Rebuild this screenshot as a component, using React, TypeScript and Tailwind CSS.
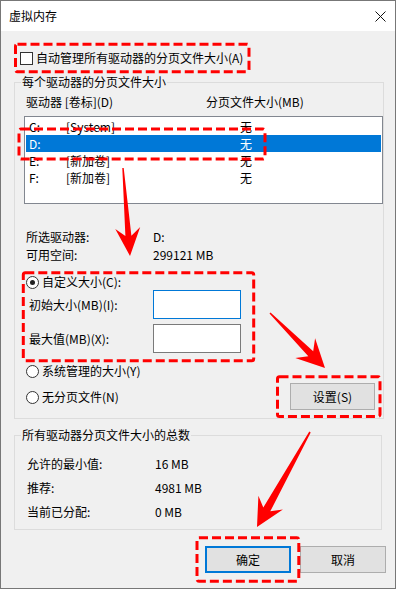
type Pt = [number, number];

// red annotation arrow: tail t, tip p, head length L, head half width H, shaft widths w0 (tail) / w1 (neck)
function arrow(t: Pt, p: Pt, L: number, H: number, w0: number, w1: number) {
  const dx = p[0] - t[0];
  const dy = p[1] - t[1];
  const len = Math.hypot(dx, dy);
  const ux = dx / len;
  const uy = dy / len;
  const nx = -uy;
  const ny = ux;
  const nk: Pt = [p[0] - ux * L * 0.72, p[1] - uy * L * 0.72];
  const bb: Pt = [p[0] - ux * L, p[1] - uy * L];
  const pts: Pt[] = [
    [t[0] + (nx * w0) / 2, t[1] + (ny * w0) / 2],
    [nk[0] + (nx * w1) / 2, nk[1] + (ny * w1) / 2],
    [bb[0] + nx * H, bb[1] + ny * H],
    p,
    [bb[0] - nx * H, bb[1] - ny * H],
    [nk[0] - (nx * w1) / 2, nk[1] - (ny * w1) / 2],
    [t[0] - (nx * w0) / 2, t[1] - (ny * w0) / 2],
  ];
  return pts.map((q) => q.map((v) => v.toFixed(1)).join(",")).join(" ");
}

const drives = [
  { d: "C:", label: "[System]", size: "无" },
  { d: "D:", label: "", size: "无", selected: true },
  { d: "E:", label: "[新加卷]", size: "无" },
  { d: "F:", label: "[新加卷]", size: "无" },
];

function Radio({ checked }: { checked?: boolean }) {
  return (
    <span className="w-[13px] h-[13px] rounded-full border border-[#333] bg-white flex items-center justify-center shrink-0">
      {checked && <span className="w-[5px] h-[5px] rounded-full bg-[#222]" />}
    </span>
  );
}

const boxes = [
  { x: 15.5, y: 44.2, w: 233.5, h: 27.6 },
  { x: 19, y: 129, w: 246, h: 30 },
  { x: 23.3, y: 272.7, w: 230.4, h: 88 },
  { x: 277.5, y: 376.7, w: 102.5, h: 39.8 },
  { x: 197, y: 537.7, w: 101.8, h: 43.6 },
];

export default function App() {
  return (
    <div className="relative w-[396px] h-[589px] font-['Noto_Sans_CJK_SC',sans-serif] text-[12px] text-black">
      <div className="w-full h-full border border-[#777] bg-[#f0f0f0] flex flex-col overflow-hidden">
        <div className="h-[30px] shrink-0 bg-white flex items-center justify-between pl-[8px] pr-[9px]">
          <span className="leading-[16px]">虚拟内存</span>
          <svg width="11" height="11" viewBox="0 0 11 11">
            <path d="M0.5 0.5 L10.5 10.5 M10.5 0.5 L0.5 10.5" stroke="#111" strokeWidth="1" />
          </svg>
        </div>

        <div className="flex flex-col">
          <div className="mt-[17px] pl-[19px] h-[20px] flex items-center gap-[3px]">
            <span className="w-[13px] h-[13px] border border-[#333] bg-white" />
            <span className="leading-[20px]">自动管理所有驱动器的分页文件大小(A)</span>
          </div>

          <fieldset className="mt-[6px] ml-[13px] w-[368px] h-[345px] border border-[#dcdcdc]">
            <legend className="ml-[6px] px-[1px] leading-[16px]">每个驱动器的分页文件大小</legend>
            <div className="mt-[4px] pl-[11px] flex leading-[16px]">
              <span className="w-[180px]">驱动器 [卷标](D)</span>
              <span>分页文件大小(MB)</span>
            </div>
            <div className="mt-[6px] ml-[9px] w-[359px] h-[88px] border border-[#828790] bg-white p-[1px]">
              {drives.map((r) => (
                <div
                  key={r.d}
                  className={
                    "h-[17px] leading-[17px] flex pl-[3px] " +
                    (r.selected ? "bg-[#0078d7] text-white" : "")
                  }
                >
                  <span className="w-[37px]">{r.d}</span>
                  <span className="w-[174px]">{r.label}</span>
                  <span>{r.size}</span>
                </div>
              ))}
            </div>

            <div className="mt-[24px] pl-[11px] flex leading-[18px]">
              <span className="w-[127px]">所选驱动器:</span>
              <span>D:</span>
            </div>
            <div className="pl-[11px] flex leading-[18px]">
              <span className="w-[127px]">可用空间:</span>
              <span>299121 MB</span>
            </div>

            <div className="mt-[10px] pl-[11px] h-[16px] flex items-center gap-[3px]">
              <Radio checked />
              <span className="leading-[16px]">自定义大小(C):</span>
            </div>
            <div className="pl-[14px] h-[29px] flex items-center">
              <span className="w-[124px]">初始大小(MB)(I):</span>
              <span className="w-[88px] h-[29px] border border-[#0078d7] bg-white" />
            </div>
            <div className="mt-[5px] pl-[14px] h-[29px] flex items-center">
              <span className="w-[124px]">最大值(MB)(X):</span>
              <span className="w-[88px] h-[29px] border border-[#7a7a7a] bg-white" />
            </div>

            <div className="mt-[9px] pl-[11px] pr-[8px] flex items-end justify-between">
              <div className="flex flex-col gap-[8px] mb-[4px]">
                <div className="h-[18px] flex items-center gap-[3px]">
                  <Radio />
                  <span>系统管理的大小(Y)</span>
                </div>
                <div className="h-[18px] flex items-center gap-[3px]">
                  <Radio />
                  <span>无分页文件(N)</span>
                </div>
              </div>
              <button className="w-[85px] h-[27px] border border-[#adadad] bg-[#e1e1e1]">设置(S)</button>
            </div>
          </fieldset>

          <fieldset className="mt-[8px] ml-[13px] w-[368px] h-[103px] border border-[#dcdcdc]">
            <legend className="ml-[6px] px-[1px] leading-[16px]">所有驱动器分页文件大小的总数</legend>
            <div className="mt-[12px] pl-[12px] flex leading-[18px]">
              <span className="w-[128px]">允许的最小值:</span>
              <span>16 MB</span>
            </div>
            <div className="mt-[6px] pl-[12px] flex leading-[18px]">
              <span className="w-[128px]">推荐:</span>
              <span>4981 MB</span>
            </div>
            <div className="mt-[6px] pl-[12px] flex leading-[18px]">
              <span className="w-[128px]">当前已分配:</span>
              <span>0 MB</span>
            </div>
          </fieldset>

          <div className="mt-[16px] pr-[9px] flex justify-end gap-[9px]">
            <button className="w-[86px] h-[27px] border-2 border-[#0078d7] bg-[#e1e1e1]">确定</button>
            <button className="w-[86px] h-[27px] border border-[#adadad] bg-[#e1e1e1]">取消</button>
          </div>
        </div>
      </div>

      <svg
        className="absolute inset-0 pointer-events-none"
        width="396"
        height="589"
        viewBox="0 0 396 589"
      >
        {boxes.map((b, i) => (
          <rect
            key={i}
            x={b.x}
            y={b.y}
            width={b.w}
            height={b.h}
            rx="2"
            fill="none"
            stroke="#ff0000"
            strokeWidth="3"
            strokeDasharray="9 4"
          />
        ))}
        <polygon points={arrow([123, 168], [130, 256], 28, 12.5, 1.5, 6)} fill="#ff0000" />
        <polygon points={arrow([270, 313], [325, 368], 28, 14, 1.5, 7)} fill="#ff0000" />
        <polygon points={arrow([310, 432], [257, 527], 28, 14, 1.5, 8)} fill="#ff0000" />
      </svg>
    </div>
  );
}
